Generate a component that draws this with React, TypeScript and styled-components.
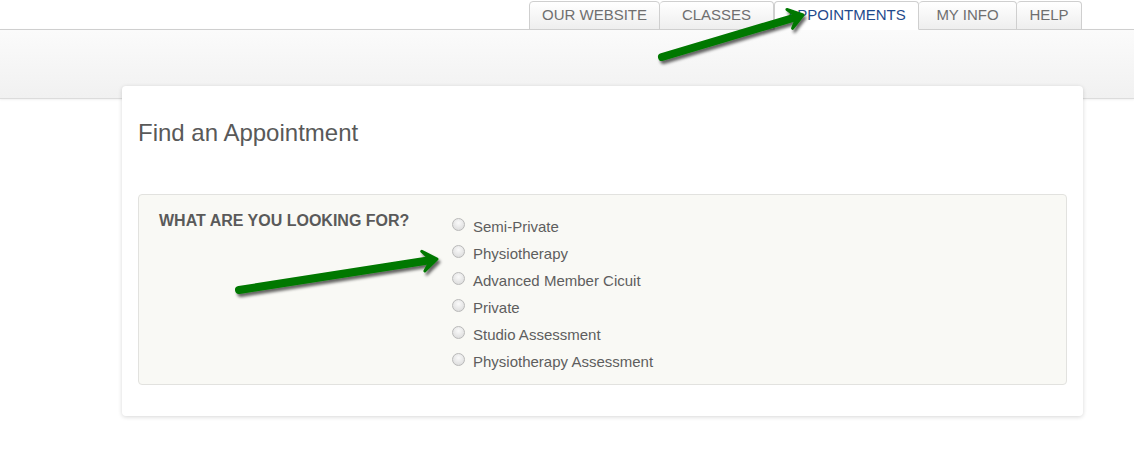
import React from "react";
import styled, { createGlobalStyle } from "styled-components";

const Global = createGlobalStyle`
  html, body { margin: 0; padding: 0; background: #fff; }
  body { font-family: "Liberation Sans", Arial, sans-serif; color: #555; }
`;

const Page = styled.div`
  position: relative;
  width: 1134px;
  height: 462px;
  overflow: hidden;
`;

const TabBar = styled.nav`
  display: flex;
  justify-content: flex-end;
  box-sizing: border-box;
  padding: 1px 52px 0 0;
  height: 30px;
  position: relative;
  z-index: 2;
`;

const Tab = styled.div<{ $active?: boolean; $first?: boolean; $w: number }>`
  width: ${(p) => p.$w}px;
  box-sizing: border-box;
  height: ${(p) => (p.$active ? 29 : 29)}px;
  display: flex;
  align-items: center;
  justify-content: center;
  font-size: 15px;
  text-transform: uppercase;
  color: ${(p) => (p.$active ? "#1f4a8c" : "#6f6f6f")};
  border: 1px solid #cfcfcf;
  border-bottom: ${(p) => (p.$active ? "1px solid #fff" : "1px solid #cfcfcf")};
  border-left: ${(p) => (p.$first || p.$active ? "1px solid #cfcfcf" : "none")};
  border-radius: 4px 4px 0 0;
  background: ${(p) =>
    p.$active ? "#fff" : "linear-gradient(#ffffff, #eeeeee)"};
  padding-bottom: 2px;
`;

const Band = styled.div`
  height: 68px;
  border-top: 1px solid #cfcfcf;
  border-bottom: 1px solid #dcdcdc;
  background: linear-gradient(#fbfbfb, #f1f1f1);
  box-shadow: 0 1px 2px rgba(0, 0, 0, 0.06);
  margin-top: -1px;
`;

const Card = styled.section`
  position: relative;
  z-index: 1;
  margin: -13px 0 0 122px;
  width: 961px;
  height: 330px;
  box-sizing: border-box;
  background: #fff;
  border-radius: 4px;
  box-shadow: 0 1px 4px rgba(0, 0, 0, 0.16);
  padding: 0 16px;
  display: flex;
  flex-direction: column;
`;

const Title = styled.h1`
  margin: 32px 0 0 0;
  font-weight: normal;
  font-size: 24px;
  line-height: 30px;
  color: #595959;
`;

const Well = styled.div`
  margin-top: 46px;
  height: 191px;
  box-sizing: border-box;
  background: #f9f9f5;
  border: 1px solid #e2e2df;
  border-radius: 4px;
  display: flex;
  padding: 15px 0 0 20px;
`;

const Label = styled.div`
  width: 293px;
  font-weight: bold;
  font-size: 16px;
  line-height: 22px;
  color: #5a5a5a;
`;

const Options = styled.div`
  display: flex;
  flex-direction: column;
  padding-top: 3px;
`;

const Option = styled.label`
  display: flex;
  align-items: center;
  height: 27px;
  font-size: 15px;
  color: #5e5e5e;
`;

const Radio = styled.span`
  width: 13px;
  height: 13px;
  box-sizing: border-box;
  border-radius: 50%;
  border: 1px solid #b9b9b9;
  background: radial-gradient(circle at 50% 35%, #fafafa, #d7d7d7);
  margin-right: 8px;
  margin-top: -5px;
`;

const Overlay = styled.svg`
  position: absolute;
  left: 0;
  top: 0;
  z-index: 5;
  pointer-events: none;
`;

const tabs = [
  { t: "Our Website", w: 131 },
  { t: "Classes", w: 114 },
  { t: "Appointments", w: 145, active: true },
  { t: "My Info", w: 98 },
  { t: "Help", w: 65 },
];

const options = [
  "Semi-Private",
  "Physiotherapy",
  "Advanced Member Cicuit",
  "Private",
  "Studio Assessment",
  "Physiotherapy Assessment",
];

function Arrow({ x1, y1, x2, y2 }: { x1: number; y1: number; x2: number; y2: number }) {
  const ang = Math.atan2(y2 - y1, x2 - x1);
  const len = 17;
  const spread = 0.62;
  const ax = x2 - len * Math.cos(ang - spread);
  const ay = y2 - len * Math.sin(ang - spread);
  const bx = x2 - len * Math.cos(ang + spread);
  const by = y2 - len * Math.sin(ang + spread);
  const bx2 = x2 - 6 * Math.cos(ang);
  const by2 = y2 - 6 * Math.sin(ang);
  return (
    <g>
      <line x1={x1} y1={y1} x2={bx2} y2={by2} stroke="#037803" strokeWidth={8} strokeLinecap="round" />
      <polygon points={`${x2},${y2} ${ax},${ay} ${bx2},${by2} ${bx},${by}`} fill="#037803" stroke="#037803" strokeWidth={3} strokeLinejoin="round" />
    </g>
  );
}

export default function App() {
  return (
    <Page>
      <Global />
      <TabBar>
        {tabs.map((t, i) => (
          <Tab key={t.t} $w={t.w} $active={t.active} $first={i === 0}>
            {t.t}
          </Tab>
        ))}
      </TabBar>
      <Band />
      <Card>
        <Title>Find an Appointment</Title>
        <Well>
          <Label>WHAT ARE YOU LOOKING FOR?</Label>
          <Options>
            {options.map((o) => (
              <Option key={o}>
                <Radio />
                {o}
              </Option>
            ))}
          </Options>
        </Well>
      </Card>
      <Overlay width={1134} height={462}>
        <defs>
          <filter id="sh" x="-20%" y="-50%" width="140%" height="200%">
            <feDropShadow dx="2" dy="3" stdDeviation="1.5" floodColor="#000" floodOpacity="0.6" />
          </filter>
        </defs>
        <g filter="url(#sh)">
          <Arrow x1={662} y1={57} x2={803} y2={15} />
          <Arrow x1={239} y1={290} x2={437} y2={259} />
        </g>
      </Overlay>
    </Page>
  );
}
